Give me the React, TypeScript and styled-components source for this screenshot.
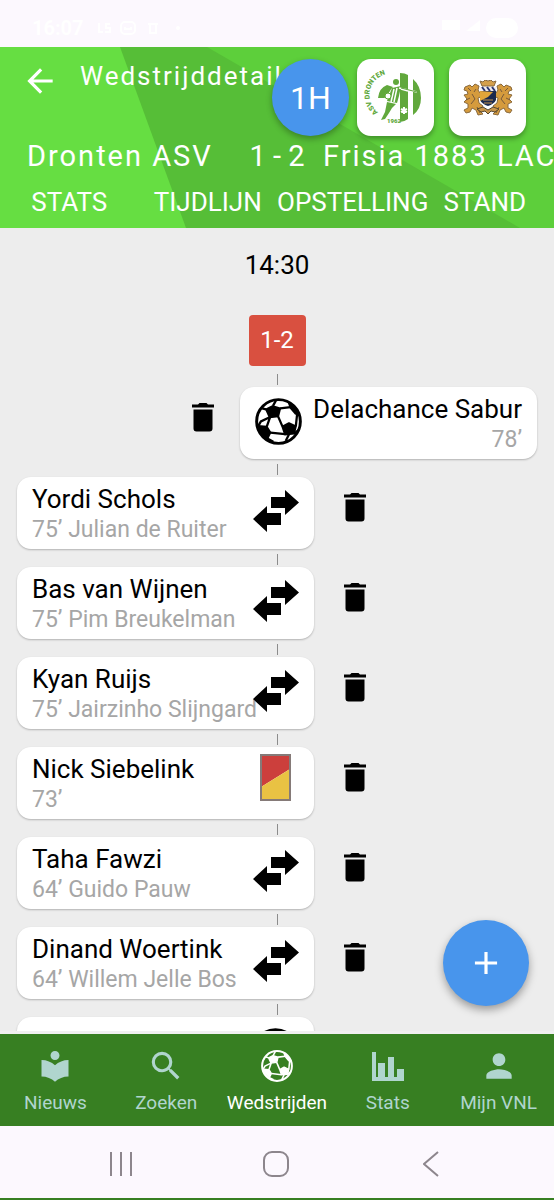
import React from "react";
import styled, { createGlobalStyle, css } from "styled-components";
import { MdAdd, MdArrowBack, MdLocalLibrary, MdPerson, MdSearch } from "react-icons/md";

const GlobalStyle = createGlobalStyle`
  *, *::before, *::after { box-sizing: border-box; }
  html, body { margin: 0; padding: 0; }
  body { font-family: Roboto, "Noto Sans", sans-serif; background: #ededed; color: #000; }
  button { font: inherit; color: inherit; border: 0; padding: 0; margin: 0; background: none; cursor: pointer; }
  h1, ol, p { margin: 0; padding: 0; font-weight: 400; }
  ol { list-style: none; }
  svg { display: block; flex: none; }
`;

const Screen = styled.div`
  display: flex;
  flex-direction: column;
  height: 100vh;
`;

const StatusBar = styled.div`
  display: flex;
  align-items: center;
  justify-content: space-between;
  flex: none;
  height: 47px;
  padding: 9px 36px 0 32px;
  background: #fcf8fe;
  color: #fff;
`;

const StatusGroup = styled.div`
  display: flex;
  align-items: center;
  gap: 12px;
`;

const Clock = styled.span`
  font-size: 20px;
  font-weight: 700;
`;

const Header = styled.header`
  position: relative;
  flex: none;
  display: flex;
  flex-direction: column;
  height: 181px;
  overflow: hidden;
  background: #56be37;
  color: #fff;
`;

const Backdrop = styled.svg`
  position: absolute;
  inset: 0;
  width: 100%;
  height: 100%;
`;

const TitleRow = styled.div`
  position: relative;
  display: flex;
  align-items: flex-start;
  gap: 21px;
  padding: 13px 0 0 21px;
`;

const BackButton = styled.button`
  display: flex;
  padding-top: 2px;
`;

const Title = styled.h1`
  font-size: 26px;
  line-height: 32px;
  letter-spacing: 2px;
  white-space: nowrap;
`;

const Badges = styled.div`
  position: absolute;
  top: 12px;
  right: 28px;
  display: flex;
  gap: 15px;
`;

const PhaseBadge = styled.button`
  width: 77px;
  height: 77px;
  margin-right: -7px;
  border-radius: 50%;
  background: #4895ec;
  font-size: 32px;
  box-shadow: 0 3px 6px rgba(0, 0, 0, 0.3);
`;

const ClubBadge = styled.button`
  display: flex;
  align-items: center;
  justify-content: center;
  width: 77px;
  height: 77px;
  border-radius: 14px;
  background: #fff;
  box-shadow: 0 3px 5px rgba(0, 0, 0, 0.3);
`;

const ScoreLine = styled.div`
  position: relative;
  display: grid;
  grid-template-columns: minmax(0, 1fr) 56px minmax(0, 1fr);
  column-gap: 18px;
  margin-top: 38px;
  font-size: 29px;
  line-height: 36px;
  letter-spacing: 2px;
  white-space: nowrap;
`;

const HomeTeam = styled.span`
  padding-left: 27px;
`;

const Score = styled.span`
  letter-spacing: 0;
  text-align: center;
`;

const Tabs = styled.nav`
  position: relative;
  display: grid;
  grid-template-columns: repeat(4, minmax(0, 1fr));
  margin-top: 8px;
`;

const Tab = styled.button`
  display: flex;
  justify-content: safe center;
  font-size: 26px;
  line-height: 40px;
  white-space: nowrap;
`;

const Content = styled.div`
  position: relative;
  flex: 1;
  min-height: 0;
`;

const Timeline = styled.main`
  height: 100%;
  overflow-y: auto;
  scrollbar-width: none;
  padding: 18px 17px 0;
  text-align: center;
`;

const KickOff = styled.p`
  font-size: 26px;
  line-height: 38px;
`;

const ScoreBox = styled.p`
  width: 57px;
  margin: 31px auto 0;
  border-radius: 4px;
  background: #d95040;
  color: #fff;
  font-size: 24px;
  line-height: 51px;
`;

const Row = styled.li<{ $away?: boolean }>`
  display: flex;
  flex-direction: ${(p) => (p.$away ? "row-reverse" : "row")};
  align-items: flex-start;
  gap: ${(p) => (p.$away ? "18px" : "22px")};

  &::before {
    content: "";
    position: absolute;
    left: 50%;
    width: 1px;
    height: 11px;
    margin-top: -13px;
    background: #8c8c8c;
  }
`;

const Events = styled.ol`
  display: flex;
  flex-direction: column;
  gap: 18px;
  margin-top: 21px;
`;

const Card = styled.div<{ $away?: boolean }>`
  display: flex;
  flex-direction: ${(p) => (p.$away ? "row-reverse" : "row")};
  width: calc(50% + 37px);
  height: 72px;
  padding: 7px 15px;
  border-radius: 14px;
  background: #fff;
  box-shadow: 0 1px 2px rgba(0, 0, 0, 0.25);
  text-align: ${(p) => (p.$away ? "right" : "left")};
`;

const CardText = styled.div`
  flex: 1;
  min-width: 0;
  white-space: nowrap;
`;

const Player = styled.p`
  font-size: 26px;
  line-height: 30px;
`;

const Detail = styled.p`
  color: #a6a6a6;
  font-size: 23px;
  line-height: 32px;
`;

const EventIcon = styled.div`
  position: relative;
  display: flex;
  align-items: center;
  justify-content: center;
  flex: none;
  width: 47px;
  height: 54px;
`;

const DeleteButton = styled.button`
  display: flex;
  align-items: center;
  justify-content: center;
  width: 38px;
  height: 60px;
`;

const AddButton = styled.button`
  position: absolute;
  right: 25px;
  bottom: 25px;
  display: flex;
  align-items: center;
  justify-content: center;
  width: 86px;
  height: 86px;
  border-radius: 50%;
  background: #4895ec;
  color: #fff;
  box-shadow: 0 4px 8px rgba(0, 0, 0, 0.35);
`;

const BottomNav = styled.nav`
  flex: none;
  display: grid;
  grid-template-columns: repeat(5, minmax(0, 1fr));
  border-top: 3px solid #f0f0f0;
  background: #377f22;
`;

const NavItem = styled.button<{ $active?: boolean }>`
  display: flex;
  flex-direction: column;
  align-items: center;
  gap: 8px;
  padding: 14px 0 12px;
  color: #b0d5ce;
  font-size: 19px;
  line-height: 22px;
  white-space: nowrap;
  ${(p) =>
    p.$active &&
    css`
      color: #fff;
    `}
`;

const NavIcon = styled.span`
  display: flex;
  align-items: center;
  height: 36px;
`;

const SystemBar = styled.div`
  flex: none;
  display: grid;
  grid-template-columns: repeat(3, minmax(0, 1fr));
  height: 74px;
  padding: 0 45px 0 43px;
  border-bottom: 2px solid #377f22;
  background: #fcf8fe;
`;

const SystemButton = styled.button`
  display: flex;
  align-items: center;
  justify-content: center;
  padding-top: 3px;
`;

function Ball({ size, ink, paper }: { size: number; ink: string; paper: string }) {
  return (
    <svg width={size} height={size} viewBox="0 0 144 144" aria-hidden="true">
      <circle cx="72" cy="72" r="67" fill={paper} stroke={ink} strokeWidth="9" />
      <g fill={ink} stroke={ink} strokeWidth="6" strokeLinejoin="round">
        <path d="M34 35L54 25L77 32L71 56L45 59Z" />
        <path d="M84 88L104 77L125 87L120 109L92 112Z" />
        <path d="M10 86L36 88L47 106L38 124Q16 110 10 86Z" />
        <path d="M104 16Q126 28 135 53L124 48L109 30Z" />
      </g>
      <g fill="none" stroke={ink} strokeWidth="7">
        <path d="M77 32L109 28M71 57L84 87M46 59L36 88M47 106L92 111M55 24L64 8M34 35L22 32M45 59L18 72L10 86M125 87L129 50M120 109L134 98M104 112L94 132M38 124L56 134" />
      </g>
    </svg>
  );
}

function Swap() {
  return (
    <svg width="46" height="42" viewBox="0 0 46 42" aria-hidden="true">
      <path d="M18 7H32V0L46 12.500L32 25V18H18ZM28 23H14V16L0 29L14 42V35H28Z" />
    </svg>
  );
}

function RedYellow() {
  return (
    <svg width="31" height="54" viewBox="0 0 31 54" aria-hidden="true">
      <path fill="#cc3f3c" d="M1 1H30V15L1 33Z" />
      <path fill="#e9c243" d="M30 15V46H1V33Z" />
      <rect x="1" y="1" width="29" height="45" fill="none" stroke="#857a78" strokeWidth="2" />
    </svg>
  );
}

function Trash() {
  return (
    <svg width="22" height="29" viewBox="0 0 22 29" aria-hidden="true">
      <path d="M0 1.500H6L7.500 0H14.500L16 1.500H22V4.500H0ZM1.500 6.500H20.500V25.500Q20.500 28.500 17.500 28.500H4.500Q1.500 28.500 1.500 25.500Z" />
    </svg>
  );
}

function StatsIcon() {
  return (
    <svg width="32" height="29" viewBox="0 0 32 29" fill="currentColor" aria-hidden="true">
      <path d="M0 0H4V25H6V11H13V25H16V5H22V25H25V17H32V29H0Z" />
    </svg>
  );
}

function DrontenCrest() {
  return (
    <svg width="52" height="54" viewBox="0 0 52 54" overflow="visible" role="img" aria-label="ASV Dronten">
      <defs>
        <path id="crest-arc" d="M8 41A21 21 0 0 1 33 7" />
      </defs>
      <g fill="#61a83c">
        <path d="M30 2Q35 2 38 4V48Q34 51 30 51Z" />
        <path d="M43 8Q51 15 51 27Q51 38 43 44Z" />
        <path d="M8 27Q9 17 17 14L23 16L18 22L16 27Z" />
        <circle cx="26" cy="11" r="3" />
        <path d="M22 17L31 15L29 25L27 32L17 30Z" />
        <path d="M17 31L26 33L22 37L19 42L15 48L11 49L15 41Z" />
      </g>
      <g fill="none" stroke="#fff" strokeWidth="1.500">
        <path d="M24 18L21 31M27 17L24 31M29 17L47 21" />
        <path d="M19 22L14 29M31 18L38 20" />
      </g>
      <path d="M20 19L15 27M31 17L47 21L48 19" fill="none" stroke="#61a83c" />
      <circle cx="18" cy="25" r="3" fill="#fff" stroke="#61a83c" />
      <path d="M34 36V43M31 38L37 41M31 41L37 38" stroke="#fff" strokeWidth="2" />
      <g fill="#61a83c" fontFamily="Roboto, sans-serif" fontWeight="900">
        <text fontSize="7">
          <textPath href="#crest-arc">ASV DRONTEN</textPath>
        </text>
        <text x="17" y="52" fontSize="6">1962</text>
      </g>
    </svg>
  );
}

function Lion() {
  return (
    <g>
      <path
        d="M2 7L7 5L9 7L12 4L16 6L15 10L17 13L20 12V16L15 18L16 23L20 26L17 31L20 34L15 35L13 30L9 28L7 32L3 33L1 30L5 28V24L1 22L4 19L1 15L5 14L4 11L1 10Z"
        fill="#d59b3d"
        stroke="#8a6a3e"
        strokeWidth="1"
      />
      <path d="M5 8L8 11M9 14L12 19L8 24M13 9L11 12M14 27L17 33M3 20L7 18" fill="none" stroke="#775a3c" />
    </g>
  );
}

function FrisiaCrest() {
  return (
    <svg width="50" height="36" viewBox="0 0 50 36" role="img" aria-label="Frisia 1883">
      <Lion />
      <g transform="translate(50 0) scale(-1 1)">
        <Lion />
      </g>
      <path d="M17 1L20 2L22 0L25 1L28 0L30 2L33 1L31 6H19Z" fill="#d5a04b" stroke="#8a6a3e" />
      <path d="M17 7H33V20Q31 24 25 26Q19 24 17 20Z" fill="#1c2a4d" />
      <path d="M17 7H33V11H17Z" fill="#f1eef2" />
      <path d="M19 7L22 11M24 7L27 11M29 7L32 11" stroke="#2b3770" strokeWidth="2" />
      <path d="M17 11L30 12L25 17L17 21Z" fill="#e2a539" />
      <path d="M20 20H30M21 23H29" stroke="#c3924a" />
      <path d="M14 29L20 27L25 30L30 27L36 29L32 32L28 31L25 34L22 31L18 32Z" fill="#c7954a" stroke="#54472f" />
    </svg>
  );
}

type Kind = "goal" | "sub" | "card";

interface MatchEvent {
  kind: Kind;
  player?: string;
  detail?: string;
  away?: boolean;
}

const events: MatchEvent[] = [
  { kind: "goal", player: "Delachance Sabur", detail: "78’", away: true },
  { kind: "sub", player: "Yordi Schols", detail: "75’ Julian de Ruiter" },
  { kind: "sub", player: "Bas van Wijnen", detail: "75’ Pim Breukelman" },
  { kind: "sub", player: "Kyan Ruijs", detail: "75’ Jairzinho Slijngard" },
  { kind: "card", player: "Nick Siebelink", detail: "73’" },
  { kind: "sub", player: "Taha Fawzi", detail: "64’ Guido Pauw" },
  { kind: "sub", player: "Dinand Woertink", detail: "64’ Willem Jelle Bos" },
  { kind: "goal" },
];

const icons: Record<Kind, React.ReactNode> = {
  goal: <Ball size={47} ink="#000" paper="#fff" />,
  sub: <Swap />,
  card: <RedYellow />,
};

const tabs = ["STATS", "TIJDLIJN", "OPSTELLING", "STAND"];

// The active ball is drawn inverted: white panels with seams in the bar's green.
const navItems = [
  { label: "Nieuws", icon: <MdLocalLibrary size={36} /> },
  { label: "Zoeken", icon: <MdSearch size={38} /> },
  { label: "Wedstrijden", icon: <Ball size={32} ink="#fff" paper="#377f22" />, active: true },
  { label: "Stats", icon: <StatsIcon /> },
  { label: "Mijn VNL", icon: <MdPerson size={38} /> },
];

export default function App() {
  return (
    <>
      <GlobalStyle />
      <Screen>
        <StatusBar>
          <StatusGroup>
            <Clock>16:07</Clock>
            <svg width="84" height="16" viewBox="0 0 84 16" fill="none" stroke="currentColor" strokeWidth="2" aria-hidden="true">
              <path d="M3 3V12H7M14 4H10V8H14V12H9" />
              <rect x="25" y="2" width="14" height="12" rx="4" />
              <path d="M29 7V9H35V7M52 4H62M54 4V13H60V4" />
              <circle cx="82" cy="8" r="1" />
            </svg>
          </StatusGroup>
          <svg width="76" height="22" viewBox="0 0 76 22" fill="currentColor" aria-hidden="true">
            <path d="M0 3H18V13H0ZM24 14L38 3V14Z" />
            <rect x="44" y="1" width="32" height="20" rx="10" />
          </svg>
        </StatusBar>

        <Header>
          <Backdrop viewBox="0 0 554 181" preserveAspectRatio="none" aria-hidden="true">
            <path fill="#66de42" d="M0 0H120L186 181H0Z" />
            <path fill="#5dcf3b" d="M207 0H554V181H520Z" />
          </Backdrop>
          <TitleRow>
            <BackButton aria-label="Terug">
              <MdArrowBack size={38} />
            </BackButton>
            <Title>Wedstrijddetails</Title>
          </TitleRow>
          <ScoreLine>
            <HomeTeam>Dronten ASV</HomeTeam>
            <Score>1 - 2</Score>
            <span>Frisia 1883 LAC</span>
          </ScoreLine>
          <Tabs>
            {tabs.map((tab) => (
              <Tab key={tab}>{tab}</Tab>
            ))}
          </Tabs>
          <Badges>
            <PhaseBadge>1H</PhaseBadge>
            <ClubBadge>
              <DrontenCrest />
            </ClubBadge>
            <ClubBadge>
              <FrisiaCrest />
            </ClubBadge>
          </Badges>
        </Header>

        <Content>
          <Timeline>
            <KickOff>14:30</KickOff>
            <ScoreBox>1-2</ScoreBox>
            <Events>
              {events.map((event, i) => (
                <Row key={i} $away={event.away}>
                  <Card $away={event.away}>
                    <CardText>
                      <Player>{event.player}</Player>
                      <Detail>{event.detail}</Detail>
                    </CardText>
                    <EventIcon>{icons[event.kind]}</EventIcon>
                  </Card>
                  <DeleteButton aria-label="Verwijderen">
                    <Trash />
                  </DeleteButton>
                </Row>
              ))}
            </Events>
          </Timeline>
          <AddButton aria-label="Toevoegen">
            <MdAdd size={38} />
          </AddButton>
        </Content>

        <BottomNav>
          {navItems.map((item) => (
            <NavItem key={item.label} $active={item.active}>
              <NavIcon>{item.icon}</NavIcon>
              {item.label}
            </NavItem>
          ))}
        </BottomNav>

        <SystemBar>
          <SystemButton aria-label="Recente apps">
            <svg width="24" height="24" viewBox="0 0 24 24" stroke="#8d868d" strokeWidth="2" aria-hidden="true">
              <path d="M2 0V24M12 0V24M22 0V24" />
            </svg>
          </SystemButton>
          <SystemButton aria-label="Startscherm">
            <svg width="26" height="26" viewBox="0 0 26 26" fill="none" stroke="#8d868d" strokeWidth="2" aria-hidden="true">
              <rect x="1" y="1" width="24" height="24" rx="8" />
            </svg>
          </SystemButton>
          <SystemButton aria-label="Vorige">
            <svg width="16" height="26" viewBox="0 0 16 26" fill="none" stroke="#8d868d" strokeWidth="2" aria-hidden="true">
              <path d="M15 1L1 13L15 25" />
            </svg>
          </SystemButton>
        </SystemBar>
      </Screen>
    </>
  );
}
